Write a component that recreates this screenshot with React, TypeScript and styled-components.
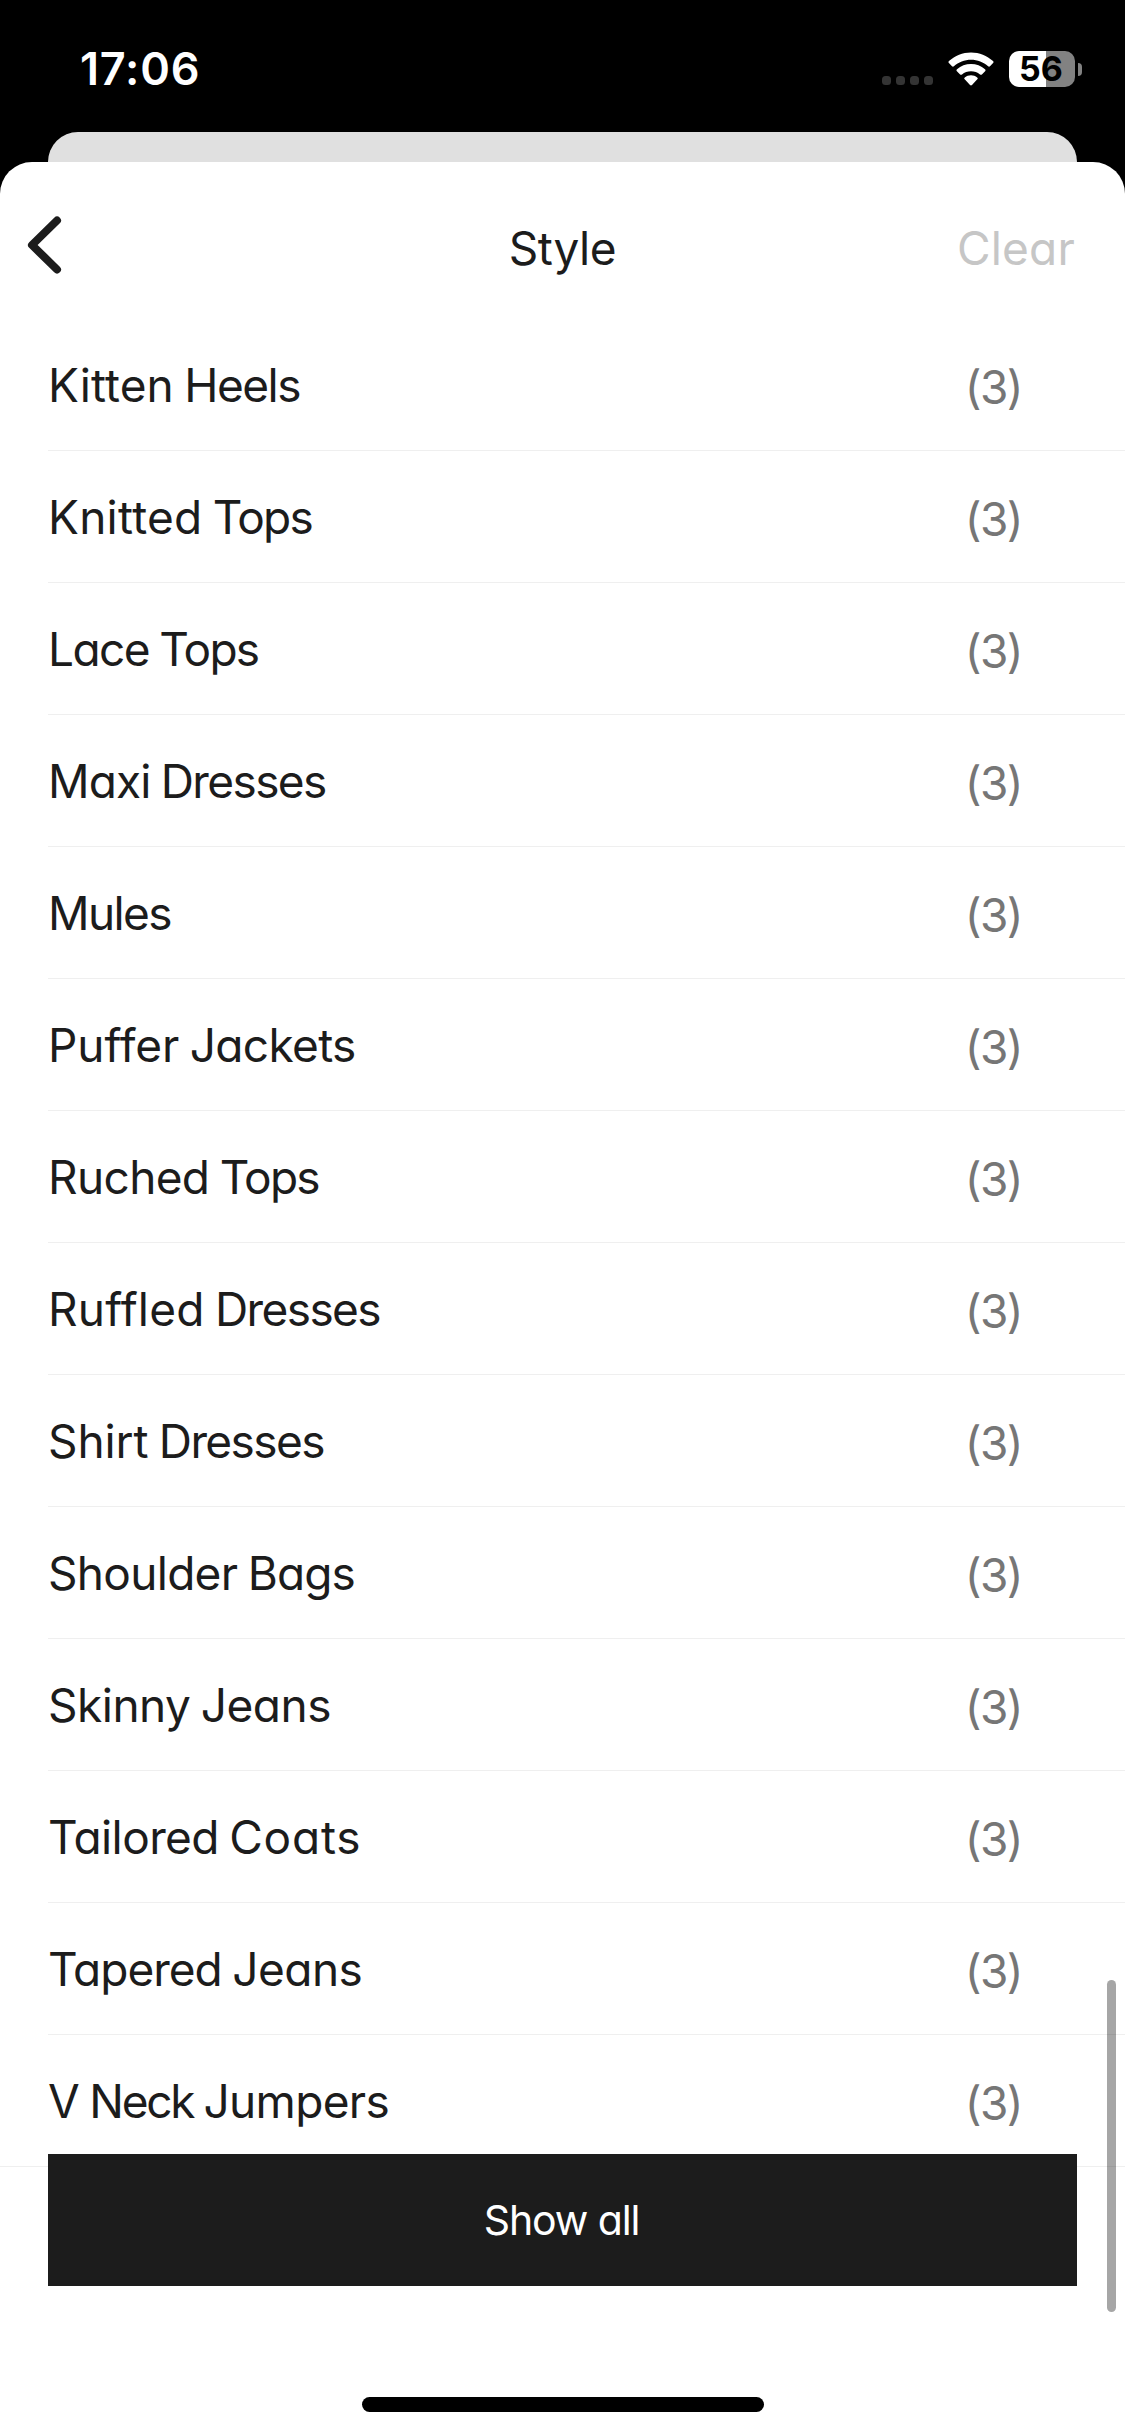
import React, { Fragment } from 'react';
import styled, { createGlobalStyle } from 'styled-components';

const Global = createGlobalStyle`
  *, *::before, *::after { box-sizing: border-box; }
  body {
    margin: 0;
    background: #000;
    font-family: Inter, "Liberation Sans", sans-serif;
    font-feature-settings: 'cv11' 1;
    font-variant-ligatures: no-common-ligatures;
  }
  button { font: inherit; font-feature-settings: inherit; border: 0; padding: 0; background: none; }
`;

const Screen = styled.div`
  position: relative;
  display: flex;
  flex-direction: column;
  width: 1125px;
  height: 2436px;
  overflow: hidden;
  background: #000;
`;

const StatusBar = styled.header`
  display: flex;
  justify-content: space-between;
  height: 132px;
  padding: 0 43px 0 80px;
`;

const Clock = styled.time`
  padding-top: 42px;
  color: #fff;
  font-size: 45px;
  font-weight: 600;
  line-height: 54px;
  letter-spacing: 0.8px;
`;

const Indicators = styled.div`
  display: flex;
  align-items: center;
  height: 36px;
  margin-top: 51px;
`;

const SignalDots = styled.div`
  display: flex;
  gap: 5px;
  margin: 23px 15px 0 0;
`;

const Dot = styled.i`
  width: 9px;
  height: 9px;
  border-radius: 3.5px;
  background: #343434;
`;

const Wifi = styled.svg`
  width: 46px;
  height: 34px;
  margin-right: 15px;
`;

const Battery = styled.div`
  display: flex;
  align-items: center;
  justify-content: center;
  width: 66px;
  height: 36px;
  padding-right: 2px;
  border-radius: 10px;
  background: linear-gradient(90deg, #fff 56%, #828282 56%);
  color: #000;
  font-size: 34px;
  font-weight: 650;
  line-height: 36px;
`;

const BatteryCap = styled.i`
  width: 4px;
  height: 13px;
  margin-left: 3px;
  border-radius: 0 6px 6px 0;
  background: #828282;
`;

const SheetBehind = styled.div`
  flex: none;
  height: 30px;
  margin: 0 48px;
  border-radius: 30px 30px 0 0;
  background: #e0e0e0;
`;

const Sheet = styled.main`
  flex: 1;
  border-radius: 32px 32px 0 0;
  background: #fff;
`;

const TitleBar = styled.div`
  display: grid;
  grid-template-columns: 1fr auto 1fr;
  align-items: center;
  height: 157px;
  padding: 14px 50px 0 27px;
  font-size: 46px;
  line-height: 56px;
`;

const BackButton = styled.button`
  width: 36px;
  height: 58px;
  margin-top: -5px;
  svg { display: block; }
`;

const Title = styled.h1`
  margin: 0 -23px 0 0;
  color: #1c1c1c;
  font: inherit;
  letter-spacing: -0.4px;
`;

const ClearButton = styled.button`
  justify-self: end;
  color: #c6c6c6;
  letter-spacing: 0.2px;
`;

const List = styled.ul`
  margin: 0;
  padding: 0;
  list-style: none;
`;

const Item = styled.li`
  display: flex;
  align-items: center;
  justify-content: space-between;
  height: 132px;
  margin-left: 48px;
  padding-right: 103px;
  border-bottom: 1px solid #efefef;
  font-size: 46px;
  line-height: 56px;

  &:last-child {
    margin-left: 0;
    padding-left: 48px;
  }
`;

const Label = styled.span`
  color: #1c1c1c;
  letter-spacing: -2.6px;
  white-space: nowrap;
`;

const Word = styled.span<{ $tracking: number }>`
  letter-spacing: ${({ $tracking }) => $tracking}px;
`;

const Count = styled.span`
  padding-top: 4px;
  color: #767676;
  letter-spacing: -1.6px;
`;

const ShowAll = styled.button`
  position: absolute;
  left: 48px;
  right: 48px;
  bottom: 150px;
  height: 132px;
  padding-right: 2px;
  background: #1c1c1c;
  color: #fff;
  font-size: 41px;
  letter-spacing: -1.1px;
`;

const ScrollThumb = styled.div`
  position: absolute;
  right: 9px;
  top: 1980px;
  width: 9px;
  height: 332px;
  border-radius: 5px;
  background: rgba(0, 0, 0, 0.35);
`;

const HomeIndicator = styled.div`
  position: absolute;
  left: 362px;
  bottom: 24px;
  width: 402px;
  height: 15px;
  border-radius: 8px;
  background: #000;
`;

const styles = [
  { name: 'Kitten Heels', count: 3 },
  { name: 'Knitted Tops', count: 3 },
  { name: 'Lace Tops', count: 3 },
  { name: 'Maxi Dresses', count: 3 },
  { name: 'Mules', count: 3 },
  { name: 'Puffer Jackets', count: 3 },
  { name: 'Ruched Tops', count: 3 },
  { name: 'Ruffled Dresses', count: 3 },
  { name: 'Shirt Dresses', count: 3 },
  { name: 'Shoulder Bags', count: 3 },
  { name: 'Skinny Jeans', count: 3 },
  { name: 'Tailored Coats', count: 3 },
  { name: 'Tapered Jeans', count: 3 },
  { name: 'V Neck Jumpers', count: 3 },
];

const tracking: Record<string, number> = {
  Kitten: 0.1,
  Knitted: 0.25,
  Lace: -1.6,
  Maxi: -0.9,
  Mules: -1.6,
  Puffer: -0.05,
  Ruched: -0.65,
  Ruffled: 0.2,
  Shirt: -0.1,
  Shoulder: -0.7,
  Skinny: -0.5,
  Tailored: -0.6,
  Tapered: -1,
  V: -0.8,
  Neck: -2.3,
  Heels: -1.5,
  Tops: -1.75,
  Dresses: -1.6,
  Jackets: -0.65,
  Bags: -0.9,
  Jeans: -0.5,
  Coats: 0.8,
  Jumpers: -0.67,
};

export default function App() {
  return (
    <Screen>
      <Global />
      <StatusBar>
        <Clock>17:06</Clock>
        <Indicators>
          <SignalDots>
            <Dot /><Dot /><Dot /><Dot />
          </SignalDots>
          <Wifi viewBox="0 0 46 34" fill="#fff">
            <path d="M23 0.5c8.4 0 16 3.2 22 8.6.7.6.7 1.4.1 2L42 14.2c-.5.6-1.3.6-1.9.1C35.5 10.1 29.5 7.7 23 7.7S10.5 10.1 5.9 14.3c-.6.5-1.4.5-1.9-.1L.9 11.1c-.6-.6-.6-1.4.1-2C7 3.7 14.6.5 23 .5z" />
            <path d="M23 12c5.3 0 10.1 1.9 14 5.2.7.6.7 1.4.1 2l-3.2 3.2c-.6.6-1.3.6-1.9.1-2.5-2-5.6-3.2-9-3.2s-6.5 1.2-9 3.2c-.6.5-1.3.5-1.9-.1l-3.2-3.2c-.6-.6-.6-1.4.1-2C12.9 13.9 17.7 12 23 12z" />
            <path d="M23 23.3c2.3 0 4.5.8 6.2 2.1.7.5.7 1.3.1 1.9l-5.3 5.7c-.6.6-1.4.6-2 0l-5.3-5.7c-.6-.6-.6-1.4.1-1.9 1.7-1.3 3.9-2.1 6.2-2.1z" />
          </Wifi>
          <Battery>56</Battery>
          <BatteryCap />
        </Indicators>
      </StatusBar>
      <SheetBehind />
      <Sheet>
        <TitleBar>
          <BackButton aria-label="Back">
            <svg width="36" height="58" viewBox="0 0 36 58" fill="none">
              <path d="M30 4.5L5 29L30 53.5" stroke="#1c1c1c" strokeWidth="8" strokeLinecap="round" strokeLinejoin="round" />
            </svg>
          </BackButton>
          <Title>Style</Title>
          <ClearButton>Clear</ClearButton>
        </TitleBar>
        <List>
          {styles.map(({ name, count }) => (
            <Item key={name}>
              <Label>
                {name.split(' ').map((word, i) => (
                  <Fragment key={word}>
                    {i > 0 && ' '}
                    <Word $tracking={tracking[word] ?? -1}>{word}</Word>
                  </Fragment>
                ))}
              </Label>
              <Count>({count})</Count>
            </Item>
          ))}
        </List>
      </Sheet>
      <ShowAll>Show all</ShowAll>
      <ScrollThumb />
      <HomeIndicator />
    </Screen>
  );
}
